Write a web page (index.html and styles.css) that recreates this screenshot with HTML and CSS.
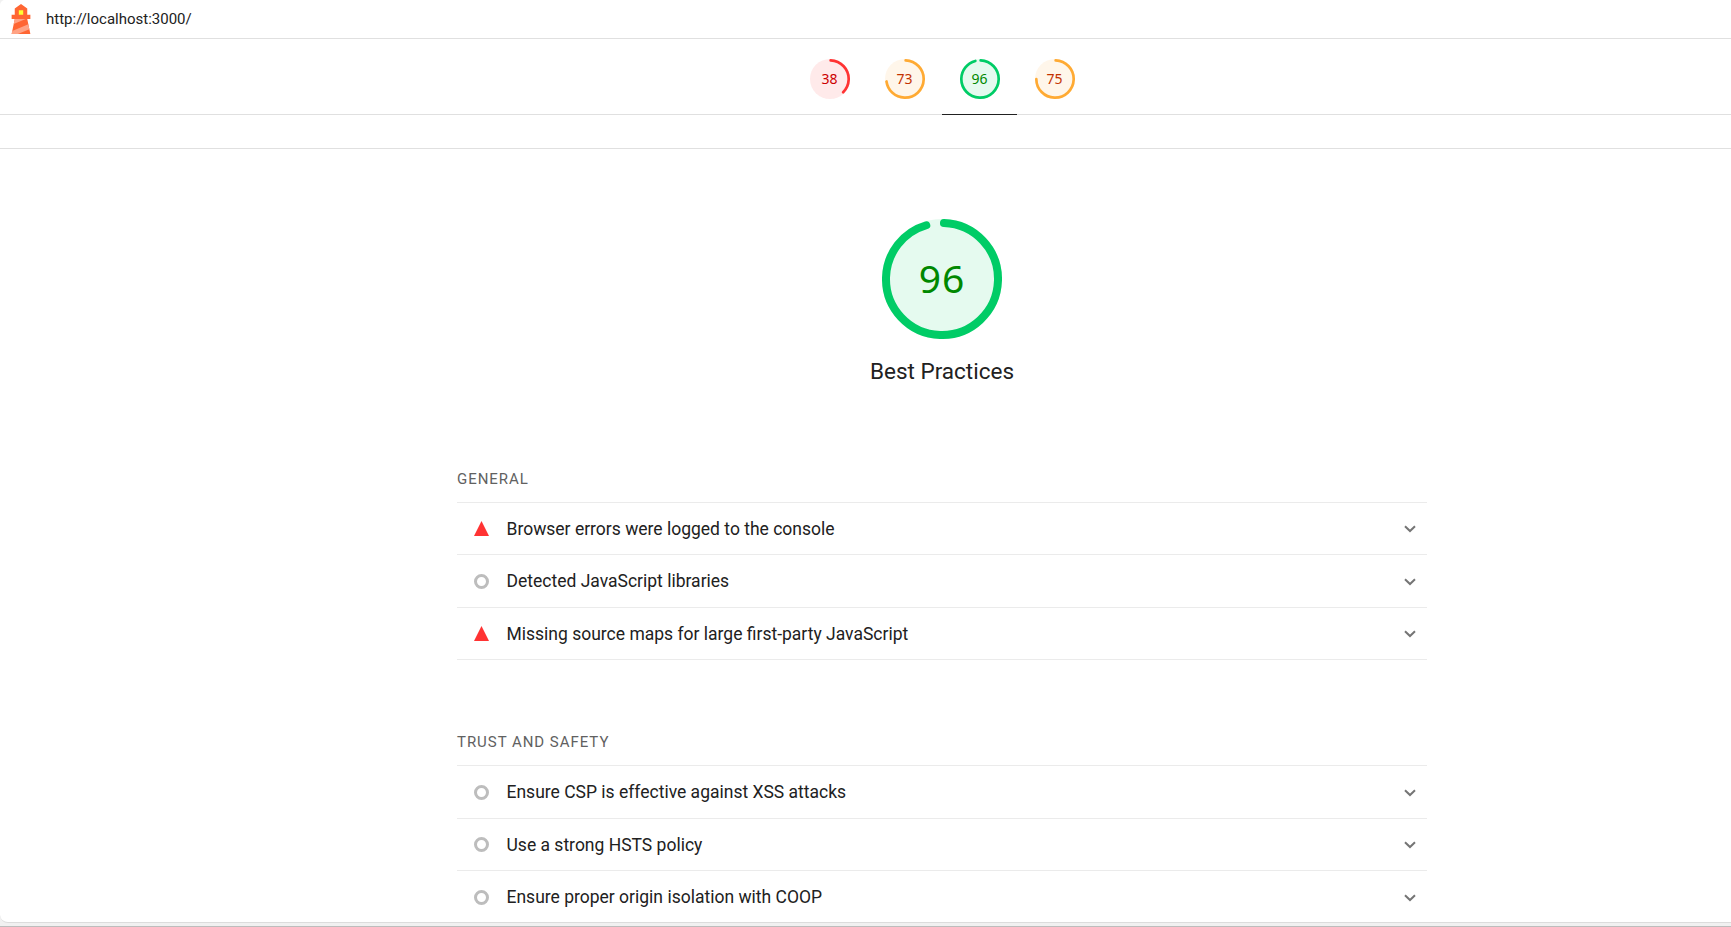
FILE: index.html
```
<!DOCTYPE html>
<html lang="en">
<head>
<meta charset="utf-8">
<title>Lighthouse Report</title>
<link rel="stylesheet" href="styles.css">
</head>
<body>
<svg class="defs" width="0" height="0">
  <symbol id="chev" viewBox="0 0 12 8"><path d="M1 1.2 6 6 11 1.2" fill="none" stroke="#757575" stroke-width="2"/></symbol>
</svg>
<div class="panel">
  <header class="topbar">
    <svg class="logo" viewBox="0 0 48 48"><path d="m14 7 10-7 10 7v10h5v7h-5l5 24H9l5-24H9v-7h5V7Z" fill="#F63"/><path d="M31.561 24H14l-1.689 8.105L31.561 24ZM18.983 48H9l1.022-4.907L35.723 32.27l1.663 7.98L18.983 48Z" fill="#FFA385"/><path fill="#FF3" d="M20.5 10h7v7h-7z"/></svg>
    <span class="url">http://localhost:3000/</span>
  </header>
  <nav class="scores">
    <a class="tab fail"><svg class="ring" viewBox="0 0 120 120"><circle class="base" cx="60" cy="60" r="60"/><circle class="arc" cx="60" cy="60" r="56" pathLength="100" stroke-dasharray="36.8 100"/></svg><span class="num">38</span></a>
    <a class="tab average"><svg class="ring" viewBox="0 0 120 120"><circle class="base" cx="60" cy="60" r="60"/><circle class="arc" cx="60" cy="60" r="56" pathLength="100" stroke-dasharray="71.9 100"/></svg><span class="num">73</span></a>
    <a class="tab pass active"><svg class="ring" viewBox="0 0 120 120"><circle class="base" cx="60" cy="60" r="60"/><circle class="arc" cx="60" cy="60" r="56" pathLength="100" stroke-dasharray="94.9 100"/></svg><span class="num">96</span></a>
    <a class="tab average"><svg class="ring" viewBox="0 0 120 120"><circle class="base" cx="60" cy="60" r="60"/><circle class="arc" cx="60" cy="60" r="56" pathLength="100" stroke-dasharray="73.9 100"/></svg><span class="num">75</span></a>
  </nav>
  <div class="strip"></div>
  <main class="category">
    <div class="gauge pass"><svg class="ring" viewBox="0 0 120 120"><circle class="base" cx="60" cy="60" r="60"/><circle class="arc" cx="60" cy="60" r="56" pathLength="100" stroke-dasharray="94.9 100"/></svg><span class="num">96</span></div>
    <h1 class="title">Best Practices</h1>
    <section class="group">
      <h2 class="group-title">General</h2>
      <div class="audit"><i class="tri"></i><span class="audit-text">Browser errors were logged to the console</span><svg class="chev"><use href="#chev"/></svg></div>
      <div class="audit"><i class="dot"></i><span class="audit-text">Detected JavaScript libraries</span><svg class="chev"><use href="#chev"/></svg></div>
      <div class="audit"><i class="tri"></i><span class="audit-text">Missing source maps for large first-party JavaScript</span><svg class="chev"><use href="#chev"/></svg></div>
    </section>
    <section class="group">
      <h2 class="group-title">Trust and Safety</h2>
      <div class="audit"><i class="dot"></i><span class="audit-text">Ensure CSP is effective against XSS attacks</span><svg class="chev"><use href="#chev"/></svg></div>
      <div class="audit"><i class="dot"></i><span class="audit-text">Use a strong HSTS policy</span><svg class="chev"><use href="#chev"/></svg></div>
      <div class="audit"><i class="dot"></i><span class="audit-text">Ensure proper origin isolation with COOP</span><svg class="chev"><use href="#chev"/></svg></div>
    </section>
  </main>
</div>
</body>
</html>
```
FILE: styles.css
```
* { box-sizing: border-box; }
html, body { margin: 0; height: 100%; overflow: hidden; }
body {
  background: #f1f1f1;
  font-family: Roboto, "Liberation Sans", sans-serif;
  color: #212121;
  border-bottom: 1px solid #bdbdbd;
}
.defs { position: absolute; }
.panel {
  height: 923px;
  overflow: hidden;
  background: #fff;
  border-bottom: 1px solid #dcdcdc;
  border-radius: 5px 0 0 8px;
}
.topbar {
  display: flex;
  align-items: center;
  height: 39px;
  padding-left: 6px;
  gap: 10px;
  border-bottom: 1px solid #e0e0e0;
}
.logo { width: 30px; height: 30px; }
.url { font-size: 15px; line-height: 20px; }
.scores {
  display: flex;
  justify-content: center;
  height: 76px;
  padding-left: 153px;
  border-bottom: 1px solid #e0e0e0;
}
.tab {
  display: grid;
  place-items: center;
  width: 75px;
  height: 76px;
  padding: 4px 0 0;
  border-bottom: 1px solid transparent;
}
.tab.active { border-bottom-color: #212121; }
.ring { grid-area: 1 / 1; width: 40px; height: 40px; }
.base { fill-opacity: .1; }
.arc {
  fill: none;
  stroke-width: 8;
  stroke-linecap: round;
  transform: rotate(-88deg);
  transform-origin: 60px 60px;
}
.fail .base { fill: #f33; }
.fail .arc { stroke: #f33; }
.average .base { fill: #fa3; }
.average .arc { stroke: #fa3; }
.pass .base { fill: #0c6; }
.pass .arc { stroke: #0c6; }
.num { grid-area: 1 / 1; font-family: "Noto Sans", sans-serif; font-size: 14px; line-height: 20px; }
.fail .num { color: #c00; }
.average .num { color: #c33300; }
.pass .num { color: #080; }
.strip { height: 34px; border-bottom: 1px solid #e0e0e0; }
.category { width: 970px; margin-left: 457px; padding-top: 70px; }
.gauge { display: grid; place-items: center; height: 120px; }
.gauge .ring { width: 120px; height: 120px; }
.gauge .num { padding-bottom: 2px; font-size: 39px; line-height: 54px; letter-spacing: 1px; }
.title {
  margin: 16px 0 0;
  font-size: 22.5px;
  line-height: 32px;
  font-weight: 400;
  text-align: center;
}
.group { margin-bottom: 72px; padding-top: 81.8px; }
.group + .group { padding-top: 0; }
.group-title {
  margin: 0;
  height: 33px;
  font-size: 15px;
  line-height: 20px;
  font-weight: 400;
  letter-spacing: .96px;
  text-transform: uppercase;
  color: #616161;
}
.audit {
  display: flex;
  align-items: center;
  height: 52.5px;
  padding: 0 11.5px 0 17px;
  border-top: 1px solid #ebebeb;
}
.audit:last-child { height: 53.5px; border-bottom: 1px solid #ebebeb; }
.tri {
  width: 15px;
  height: 15px;
  background: #f33;
  clip-path: polygon(50% 0, 100% 100%, 0 100%);
}
.dot { width: 15px; height: 15px; border: 3px solid #bdbdbd; border-radius: 50%; }
.audit-text { flex: 1; margin-left: 17.5px; font-size: 17.5px; line-height: 24px; }
.chev { width: 12px; height: 8px; margin-top: 1px; }
```
